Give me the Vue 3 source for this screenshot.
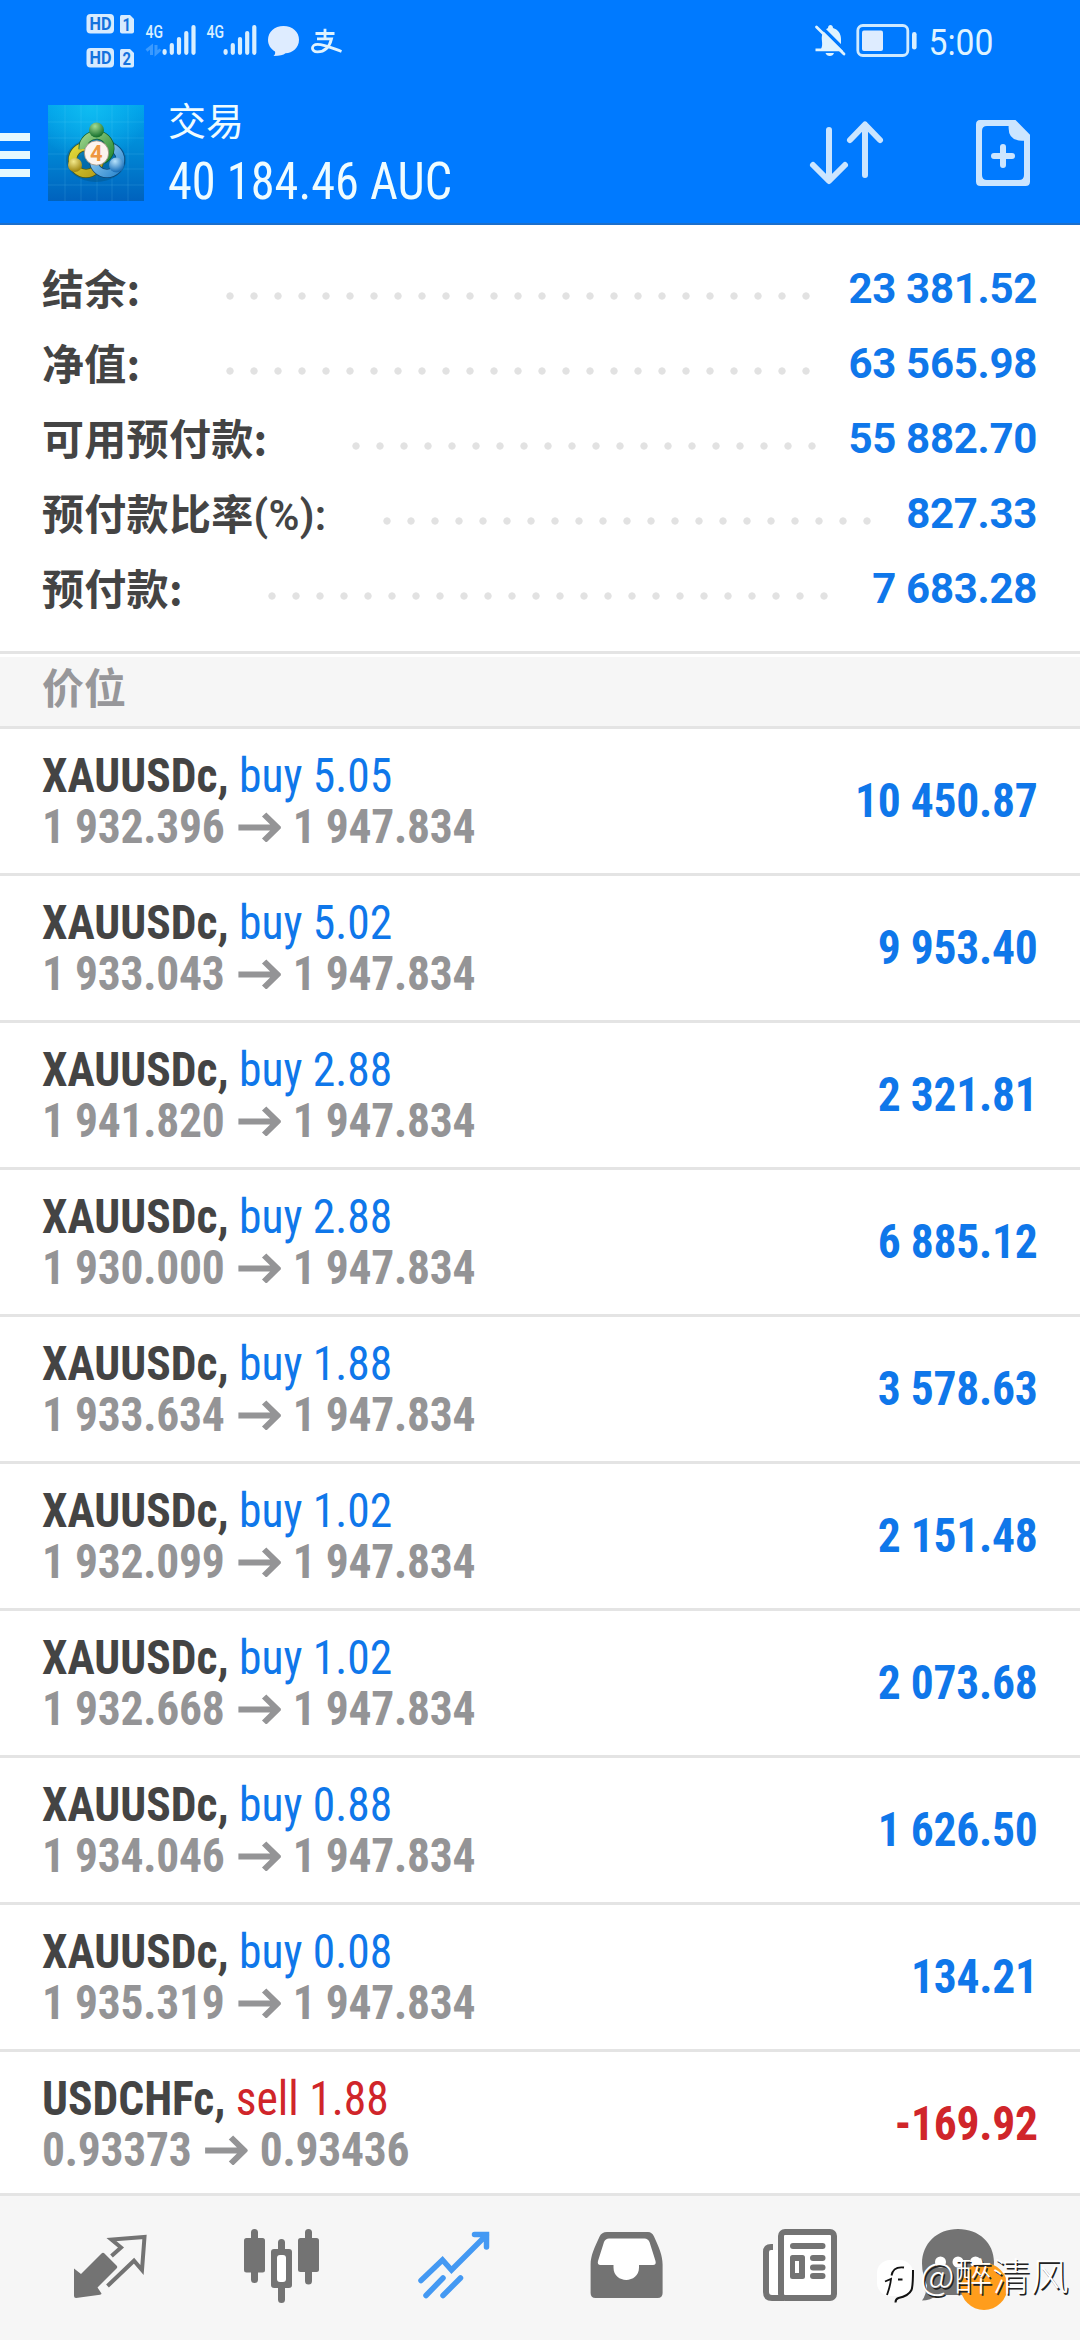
<script setup>
const summary = [
  { label: '结余:', value: '23 381.52', start: 230, dots: 25 },
  { label: '净值:', value: '63 565.98', start: 230, dots: 25 },
  { label: '可用预付款:', value: '55 882.70', start: 356.4, dots: 20 },
  { label: '预付款比率', unit: '(%):', value: '827.33', start: 387.4, dots: 21 },
  { label: '预付款:', value: '7 683.28', start: 272, dots: 24 },
]

const gold = (volume, open, profit) => ({
  symbol: 'XAUUSDc,', side: 'buy', volume, open, current: '1 947.834', profit,
})

const positions = [
  gold('5.05', '1 932.396', '10 450.87'),
  gold('5.02', '1 933.043', '9 953.40'),
  gold('2.88', '1 941.820', '2 321.81'),
  gold('2.88', '1 930.000', '6 885.12'),
  gold('1.88', '1 933.634', '3 578.63'),
  gold('1.02', '1 932.099', '2 151.48'),
  gold('1.02', '1 932.668', '2 073.68'),
  gold('0.88', '1 934.046', '1 626.50'),
  gold('0.08', '1 935.319', '134.21'),
  { symbol: 'USDCHFc,', side: 'sell', volume: '1.88', open: '0.93373', current: '0.93436', profit: '-169.92' },
]
</script>

<template>
  <div class="screen">
    <header class="header">
      <div class="status">
        <svg class="status-left" width="360" height="80" viewBox="0 0 360 80">
          <g fill="#d6ebff">
            <rect x="86.5" y="14" width="27.5" height="19.500" rx="4" />
            <rect x="86.500" y="48" width="27.500" height="19.500" rx="4" />
            <path d="M121.500 15h8.500l4 4v12.500q0 2-2 2h-10q-2 0-2-2v-14.500q0-2 1.500-2z" />
            <path d="M121.500 49h8.500l4 4v12.500q0 2-2 2h-10q-2 0-2-2v-14.500q0-2 1.500-2z" />
          </g>
          <g class="badge-text">
            <text x="89.500" y="30" textLength="22" lengthAdjust="spacingAndGlyphs">HD</text>
            <text x="89.500" y="64" textLength="22" lengthAdjust="spacingAndGlyphs">HD</text>
            <text x="122.500" y="31" textLength="8.500" lengthAdjust="spacingAndGlyphs">1</text>
            <text x="122.500" y="65" textLength="8.500" lengthAdjust="spacingAndGlyphs">2</text>
          </g>
          <g class="net-text">
            <text x="145.500" y="38" textLength="17.500" lengthAdjust="spacingAndGlyphs">4G</text>
            <text x="206.500" y="38" textLength="17.500" lengthAdjust="spacingAndGlyphs">4G</text>
          </g>
          <g stroke="#d9efff" stroke-width="4.200" stroke-linecap="round">
            <path d="M164.600 51.200v1.600M171.800 45v7.800M179 39v13.800M186.300 33v19.800M193.500 27v25.800" />
            <path d="M225.600 51.200v1.600M232.800 45v7.800M240 39v13.800M247.200 33v19.800M254.300 27v25.800" />
          </g>
          <path d="M146.500 50.500l5-4v8.500M156 45v8.500l4.500-4" fill="none" stroke="#3a9aff" stroke-width="3" />
          <path d="M283.500 26c9 0 15.500 5.800 15.500 13.800s-6.500 13.500-13.500 13.500c-2 1.700-6 2.700-12 2.700 1.500-1 2-3 1.500-4.500-4.200-2.400-7-6.500-7-11.700 0-8 6.500-13.800 15.500-13.800z" fill="#deecff" />
          <g fill="none" stroke="#dff3ff" stroke-width="2.800">
            <path d="M315.500 33.500h19M325 28.800v9.500M317 38.800h14.500c-1.500 6-5.500 13-14 13-7 0-6.500-7.500 0-7.500 7 0 14 3.500 24 7.200" />
          </g>
        </svg>
        <svg class="status-right" width="200" height="80" viewBox="810 0 200 80">
          <path d="M821 49c2.500-4.500 0-9 1-13.500 1.500-5 4-6.500 6-7.500 0-4 5-4 5 0 5 1.500 8 5.500 8 11v10" fill="#dff3ff" />
          <path d="M815.500 48.500h27.500v2.800h-27.500zM825.500 53h8.500q-1 3-4.200 3t-4.300-3z" fill="#dff3ff" />
          <path d="M819 24.500l28 28" stroke="#007aff" stroke-width="3.200" />
          <path d="M816.500 27l27.500 27" stroke="#dff3ff" stroke-width="2.800" stroke-linecap="round" />
          <rect x="857.800" y="25.500" width="50" height="30" rx="5" fill="none" stroke="#cfeaff" stroke-width="2.800" />
          <rect x="862" y="30.500" width="21" height="20.500" rx="2" fill="#deecff" />
          <rect x="912" y="32" width="4.600" height="17.500" rx="2.300" fill="#d9efff" />
          <text class="clock" x="928.500" y="54.500" textLength="65" lengthAdjust="spacingAndGlyphs">5:00</text>
        </svg>
      </div>
      <div class="toolbar">
        <div class="burger"><i></i><i></i><i></i></div>
        <svg class="logo" width="96" height="96" viewBox="0 0 96 96">
          <defs>
            <linearGradient id="bg" x1="0" y1="0" x2="0" y2="1">
              <stop offset="0" stop-color="#00a2ea" />
              <stop offset=".45" stop-color="#0089d6" />
              <stop offset="1" stop-color="#0062bd" />
            </linearGradient>
            <radialGradient id="glow" cx=".45" cy="0" r=".6">
              <stop offset="0" stop-color="#10bdf2" />
              <stop offset="1" stop-color="#10bdf2" stop-opacity="0" />
            </radialGradient>
            <linearGradient id="green" x1="0" y1="0" x2="1" y2="1">
              <stop offset="0" stop-color="#9bd289" /><stop offset="1" stop-color="#268a35" />
            </linearGradient>
            <linearGradient id="yellow" x1="0" y1="0" x2="1" y2="1">
              <stop offset="0" stop-color="#e0d93a" /><stop offset="1" stop-color="#b79d18" />
            </linearGradient>
            <linearGradient id="blue" x1="0" y1="0" x2="1" y2="1">
              <stop offset="0" stop-color="#9fd4f3" /><stop offset="1" stop-color="#2d88cf" />
            </linearGradient>
            <radialGradient id="gball" cx=".4" cy=".25" r=".7">
              <stop offset="0" stop-color="#a4dc94" /><stop offset="1" stop-color="#1a7430" />
            </radialGradient>
            <radialGradient id="yball" cx=".4" cy=".25" r=".7">
              <stop offset="0" stop-color="#f3e98b" /><stop offset="1" stop-color="#a38a14" />
            </radialGradient>
            <radialGradient id="bball" cx=".4" cy=".25" r=".7">
              <stop offset="0" stop-color="#b7e2fb" /><stop offset="1" stop-color="#1b70ba" />
            </radialGradient>
          </defs>
          <rect width="96" height="96" fill="url(#bg)" />
          <rect width="96" height="96" fill="url(#glow)" />
          <path d="M0 17h96M0 33h96M0 49h96M0 64h96M0 80h96M17 0v96M33 0v96M49 0v96M64 0v96M80 0v96" stroke="#7ce3ff" stroke-opacity=".14" />
          <ellipse cx="48" cy="55" rx="30" ry="22" fill="#064a6e" opacity=".35" />
          <circle cx="38" cy="55" r="13.500" fill="none" stroke="#4f5b14" stroke-width="9" />
          <circle cx="38" cy="55" r="13.500" fill="none" stroke="url(#yellow)" stroke-width="7.500" />
          <circle cx="59" cy="55" r="13.500" fill="none" stroke="#0d4778" stroke-width="9" />
          <circle cx="59" cy="55" r="13.500" fill="none" stroke="url(#blue)" stroke-width="7.500" />
          <path d="M35 44a13.500 13.500 0 1 1 26.500 3q-2 5-7 8" fill="none" stroke="#155c27" stroke-width="9" />
          <path d="M35 44a13.500 13.500 0 1 1 26.500 3q-2 5-7 8" fill="none" stroke="url(#green)" stroke-width="7.500" />
          <circle cx="48.500" cy="25" r="7.500" fill="url(#gball)" />
          <circle cx="27" cy="60" r="7" fill="url(#yball)" />
          <circle cx="68.500" cy="60" r="7.500" fill="url(#bball)" />
          <circle cx="48.500" cy="48" r="12.200" fill="#fbf3ee" stroke="#9b8b7a" stroke-width=".8" />
          <text x="42" y="56" class="four">4</text>
        </svg>
        <div class="titles">
          <div class="title">交易</div>
          <div class="equity cond">40 184.46 AUC</div>
        </div>
        <svg class="actions" width="280" height="100" viewBox="799 104 280 100">
          <g fill="none" stroke="#cbe5ff" stroke-width="6" stroke-linecap="round" stroke-linejoin="round">
            <path d="M828 130v50M812 165l16 16 16-16M864 175v-50M849 140l15-15.500 15 15.500" />
            <path d="M1002 147v18M993 156h18" />
          </g>
          <path fill-rule="evenodd" fill="#cbe5ff" d="M979 120h35.500l14.500 14.700V181.500q0 4.500-4.500 4.500h-45q-4.500 0-4.500-4.500v-57q0-4.500 4-4.500zM986 126q-5 0-5 5v44q0 5 5 5h32q5 0 5-5v-34.300h-2q-13.400 0-13.400-12.700v-2z" />
        </svg>
      </div>
    </header>

    <section class="summary">
      <div v-for="row in summary" :key="row.label" class="summary-row">
        <span class="label" :style="{ width: row.start - 54 + 'px' }">{{ row.label }}<span v-if="row.unit" class="unit">{{ row.unit }}</span></span>
        <span class="leader" :style="{ width: row.dots * 24 + 'px' }"></span>
        <span class="amount">{{ row.value }}</span>
      </div>
    </section>

    <div class="section-title">价位</div>

    <main class="positions">
      <article v-for="(p, i) in positions" :key="i" class="position">
        <div class="info">
          <div class="line"><b>{{ p.symbol }}</b> <span :class="p.side">{{ p.side }} {{ p.volume }}</span></div>
          <div class="line prices">
            <span>{{ p.open }}</span>
            <svg width="45" height="30" viewBox="0 0 42 30" preserveAspectRatio="none"><path d="M0 15.500h38M25.500 2.500l13 13-13 13" fill="none" stroke="#949496" stroke-width="6" /></svg>
            <span>{{ p.current }}</span>
          </div>
        </div>
        <div class="profit" :class="p.side">{{ p.profit }}</div>
      </article>
    </main>

    <nav class="tabs">
      <svg viewBox="24 2196 172 144">
        <path d="M74 2268.500l7 5.500 20.500-20.500q1.500-1.500 3 0l12 12q1.500 1.500 0 3L97.500 2287.500l4 6q0 1-1.500 1.200L76 2298q-2 0-2-2z" fill="#737373" />
        <path d="M111.500 2256l9.500-8.500-9.500-8 33-2.500-2.500 33-8-9.300-26.500 25.300" fill="none" stroke="#737373" stroke-width="4" />
      </svg>
      <svg viewBox="196 2196 172 144">
        <path d="M254.500 2232.500v47M281.500 2242.500v57M308.500 2232.500v48.500" stroke="#737373" stroke-width="7" stroke-linecap="round" />
        <g fill="#737373"><rect x="244" y="2238" width="21" height="34.500" rx="2.500" /><rect x="271" y="2249" width="21" height="39" rx="3" /><rect x="298" y="2238" width="21" height="34" rx="2.500" /></g>
        <rect x="277" y="2255" width="9" height="27" rx="3" fill="#fff" />
      </svg>
      <svg viewBox="368 2196 172 144">
        <g fill="none" stroke="#4499f3" stroke-width="5.500" stroke-linecap="round">
          <path d="M421 2280.500l21.500-20.500 9 10 35-35M474.500 2234.500h12v12.500M426 2295.500l17-17.500M443 2295.500l17.500-17.500" />
        </g>
        <path d="M478 2232h11v11z" fill="#4499f3" />
      </svg>
      <svg viewBox="540 2196 172 144">
        <path d="M607 2232h41q4 0 6 4.500c5 11 8.600 19 8.600 28v28.500q0 5-5 5h-62q-5 0-5-5v-28.500c0-9 4-17 9-28q2-4.500 7.400-4.500z" fill="#737373" />
        <path d="M609 2238.500h35.500q3.500 0 5 3.500l6 19q1 4-2.500 4h-14v2.500c0 16.500-25.500 16.500-25.500 0v-2.500h-13q-3.500 0-2.500-4l6-19q1.500-3.500 5-3.500z" fill="#fff" />
      </svg>
      <svg viewBox="712 2196 172 144">
        <path d="M766 2250h16v48h-16z" fill="#fff" />
        <path d="M773 2247h-2q-5 0-5 5v40q0 6 6 6h12" fill="none" stroke="#737373" stroke-width="6" />
        <rect x="781" y="2232" width="53" height="66" rx="4" fill="#fff" stroke="#737373" stroke-width="6" />
        <g fill="#737373">
          <rect x="790" y="2243" width="35.500" height="6" rx="3" /><rect x="790" y="2255" width="15" height="24" rx="2.500" />
          <rect x="810" y="2255" width="15.500" height="6" rx="3" /><rect x="810" y="2264.500" width="15.500" height="6" rx="3" /><rect x="810" y="2273" width="15.500" height="6" rx="3" />
        </g>
        <rect x="795" y="2261" width="4" height="12" fill="#fff" />
      </svg>
      <svg viewBox="884 2196 172 144">
        <path d="M958 2229c21 0 36 14 36 33s-15 33-36 33h-20q-8 5.500-16 5.500 4-5 5-15c-3-7-5-14-5-22 0-20 15-34.500 36-34.500z" fill="#737373" />
        <g fill="#fff"><circle cx="940.500" cy="2262" r="5.500" /><circle cx="958" cy="2262" r="5.500" /><circle cx="975.500" cy="2262" r="5.500" /></g>
        <circle cx="984" cy="2286.500" r="23.500" fill="#ff9d1c" />
      </svg>
    </nav>

    <div class="watermark">
      <svg width="46" height="50" viewBox="872 2256 46 50">
        <rect x="877" y="2260" width="36" height="36" rx="13" fill="#fff" />
        <path d="M895.500 2302.500q0-3.500 3-4.500 10-2 13-8 1.500-4 1.500-20" fill="none" stroke="#111" stroke-width="2" />
        <path d="M904 2267.500c-8-1-11.500 2-12.500 8M885 2281.500l6-2.500q-.500 6-4 16M898 2279.500h4.500" fill="none" stroke="#111" stroke-width="1.800" />
      </svg>
      <span>@醉清风</span>
    </div>
  </div>
</template>

<style>
body { margin: 0; background: #fff; }
</style>

<style scoped>
.screen {
  position: relative;
  display: flex;
  flex-direction: column;
  width: 1080px;
  height: 2340px;
  overflow: hidden;
  background: #fff;
  font-family: Roboto, "Noto Sans CJK SC", sans-serif;
  color: #444;
}
svg { display: block; flex: none; }
.cond, .info, .profit {
  font-family: "Roboto Condensed", Roboto, sans-serif;
  font-stretch: 75%;
  white-space: pre;
  transform: scaleX(.948);
  transform-origin: 0 0;
}
.header {
  box-sizing: border-box;
  height: 225px;
  background: #007aff;
  border-bottom: 2px solid #1c6fcb;
}
.status { display: flex; height: 80px; }
.status-right { margin-left: 450px; }
.badge-text text { font: 700 18px Roboto, sans-serif; fill: #1472dd; }
.net-text text { font: 500 18px Roboto, sans-serif; fill: #d9efff; }
.clock { font: 400 36px Roboto, sans-serif; fill: #dff3ff; }
.four { font: 700 22px Roboto, sans-serif; fill: #ee9640; }
.toolbar { display: flex; height: 143px; }
.burger { display: flex; flex-direction: column; gap: 10px; width: 30px; padding-top: 53px; margin-right: 18px; }
.burger i { height: 8px; background: #e4f8ff; }
.logo { margin-top: 25px; }
.titles { width: 632px; padding: 20px 0 0 24px; color: #effcff; white-space: nowrap; }
.title { font-size: 38px; line-height: 44px; font-weight: 400; }
.equity { font-size: 51px; line-height: 60px; margin-top: 8px; font-weight: 450; }
.actions { margin-top: 24px; }
.summary { height: 401px; padding-top: 25px; }
.summary-row { display: flex; height: 75px; padding: 0 43px 0 42px; line-height: 75px; }
.label { flex: none; margin-top: -1px; font-size: 42px; font-weight: 700; font-family: "Noto Sans CJK SC", sans-serif; letter-spacing: .3px; white-space: nowrap; }
.unit { font-family: Roboto, sans-serif; font-weight: 600; }
.leader { flex: none; background: radial-gradient(circle at 12px 46px, #e2e2e2 3.300px, transparent 4px) 0 0 / 24px 75px repeat-x; }
.amount { margin: 1px 0 0 auto; font-size: 42px; font-weight: 700; color: #0f77ea; letter-spacing: -.3px; white-space: pre; }
.section-title {
  box-sizing: border-box;
  height: 78px;
  padding-left: 42px;
  border-top: 3px solid #e4e4e4;
  border-bottom: 3px solid #e4e4e4;
  box-shadow: inset 0 3px #fff;
  background: #f6f6f6;
  font: 700 42px/64px "Noto Sans CJK SC", sans-serif;
  color: #97979a;
}
.position {
  box-sizing: border-box;
  display: flex;
  justify-content: space-between;
  height: 147px;
  padding: 21px 42px 0 42px;
  border-bottom: 3px solid #e4e4e4;
}
.position:last-child { height: 144px; }
.line { height: 51px; font-size: 48px; line-height: 51px; }
.prices { display: flex; align-items: center; color: #949496; font-weight: 700; gap: 14px; letter-spacing: -.25px; }
.prices svg { margin-right: -1px; }
.profit { padding-top: 25px; font-size: 48px; line-height: 51px; font-weight: 700; letter-spacing: -.25px; transform-origin: 100% 0; }
.buy { color: #0f77ea; }
.sell { color: #d0252a; }
.tabs { display: flex; height: 144px; padding: 0 24px; background: #f6f6f6; }
.tabs svg { width: 172px; height: 144px; }
.watermark { position: absolute; left: 872px; top: 2256px; display: flex; color: #fff; }
.watermark span {
  margin: -3px 0 0 2px;
  font: 300 38px/42px "Noto Sans CJK SC", sans-serif;
  text-shadow: 1.500px 1.500px 0 #222;
  white-space: nowrap;
}
</style>
